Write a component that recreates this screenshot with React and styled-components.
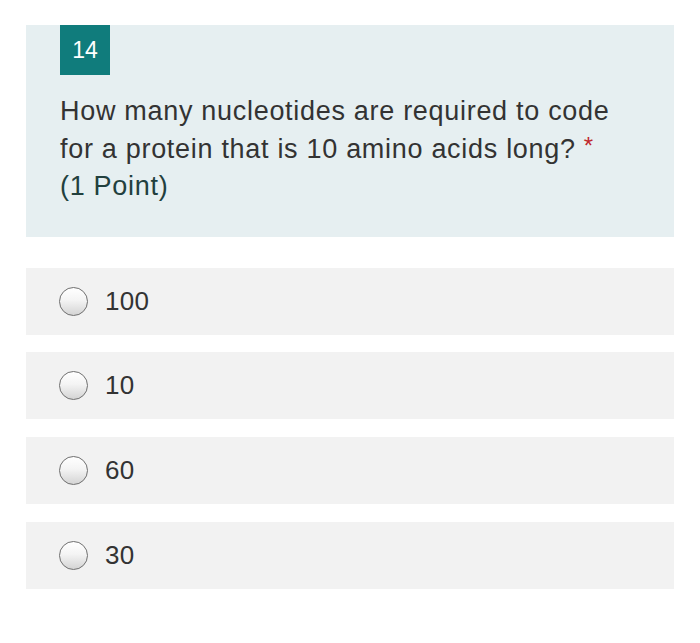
import React from 'react';
import styled, { createGlobalStyle } from 'styled-components';

const Global = createGlobalStyle`
  html, body {
    margin: 0;
    padding: 0;
    background: #ffffff;
  }
  body {
    font-family: "Liberation Sans", Arial, sans-serif;
    color: #333333;
  }
`;

const Page = styled.main`
  padding: 25px 26px 0 26px;
  display: flex;
  flex-direction: column;
`;

const QuestionCard = styled.section`
  background: #e6eff1;
  padding: 0 40px 31px 34px;
  margin-bottom: 31px;
`;

const Badge = styled.div`
  width: 50px;
  height: 50px;
  background: #107c7c;
  color: #ffffff;
  font-size: 23px;
  display: grid;
  place-items: center;
`;

const Title = styled.h2`
  margin: 18px 0 0 0;
  font-weight: 400;
  font-size: 27px;
  letter-spacing: 0.7px;
  line-height: 37.5px;
  color: #333333;
`;

const Required = styled.span`
  display: inline-block;
  color: #c0282d;
  font-size: 24px;
  line-height: 1;
  vertical-align: 4px;
  margin-left: 8px;
`;

const Points = styled.span`
  display: block;
  color: #22403e;
`;

const Options = styled.div`
  display: flex;
  flex-direction: column;
  gap: 17.7px;
`;

const Option = styled.label`
  height: 67px;
  background: #f2f2f2;
  display: flex;
  align-items: center;
  padding-left: 33px;
  gap: 17px;
  font-size: 26px;
  letter-spacing: 0.3px;
  color: #333333;
`;

const Radio = styled.span`
  width: 27px;
  height: 27px;
  border-radius: 50%;
  border: 1.5px solid #6f6f6f;
  background: linear-gradient(180deg, #ffffff 0%, #f4f4f4 45%, #d4d4d4 100%);
  flex-shrink: 0;
`;

const answers = ['100', '10', '60', '30'];

const App = () => {
  return (
    <>
      <Global />
      <Page>
        <QuestionCard>
          <Badge>14</Badge>
          <Title>
            How many nucleotides are required to code for a protein that is 10 amino acids long?
            <Required>*</Required>
            <Points>(1 Point)</Points>
          </Title>
        </QuestionCard>
        <Options>
          {answers.map((a) => (
            <Option key={a}>
              <Radio />
              {a}
            </Option>
          ))}
        </Options>
      </Page>
    </>
  );
};

export default App;
